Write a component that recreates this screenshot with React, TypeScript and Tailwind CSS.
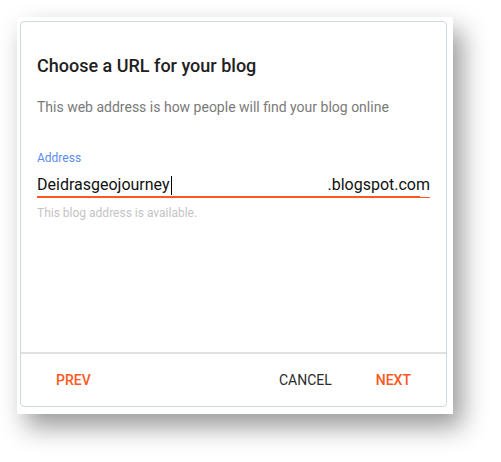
export default function App() {
  return (
    <div className="min-h-screen bg-white pl-[17px] pt-[17px] font-['Roboto',sans-serif]">
      <div className="w-[436px] h-[397px] bg-white pl-[3px] pt-[4px] shadow-[9px_13px_24px_rgba(0,0,0,0.4)]">
        <div className="w-[427px] h-[386px] rounded-[4px] border border-[#cfd8e0] flex flex-col">
          <div className="flex-1 px-[16px] pt-[32px]">
            <h1 className="text-[18px] leading-[24px] font-medium text-[#212121]">
              Choose a URL for your blog
            </h1>
            <p className="mt-[19px] text-[14px] leading-[20px] text-[#7a7a7a]">
              This web address is how people will find your blog online
            </p>

            <label className="block mt-[33px] text-[12px] leading-[16px] text-[#5b8def]">
              Address
            </label>
            <div className="mt-[7px] w-[393px] border-b border-[#ff5722] relative">
              <div className="flex items-center justify-between text-[16px] leading-[24px] text-[#111]">
                <span className="flex items-center">
                  Deidrasgeojourney
                  <span className="ml-[1px] inline-block w-[1px] h-[19px] bg-black" />
                </span>
                <span>.blogspot.com</span>
              </div>
              <div className="absolute left-0 bottom-[-1px] w-[383px] h-[2px] bg-[#ff5722]" />
            </div>
            <p className="mt-[7px] text-[12px] leading-[16px] text-[#c4c4c4]">
              This blog address is available.
            </p>
          </div>

          <div className="h-[54px] border-t-2 border-[#e0e0e0] flex items-center px-[19px]">
            <button className="px-[16px] text-[14px] font-medium uppercase text-[#ff5722]">Prev</button>
            <div className="flex-1" />
            <button className="px-[16px] text-[14px] font-normal uppercase text-[#2b2b2b]">Cancel</button>
            <button className="ml-[12px] px-[16px] text-[14px] font-medium uppercase text-[#ff5722]">Next</button>
          </div>
        </div>
      </div>
    </div>
  );
}
